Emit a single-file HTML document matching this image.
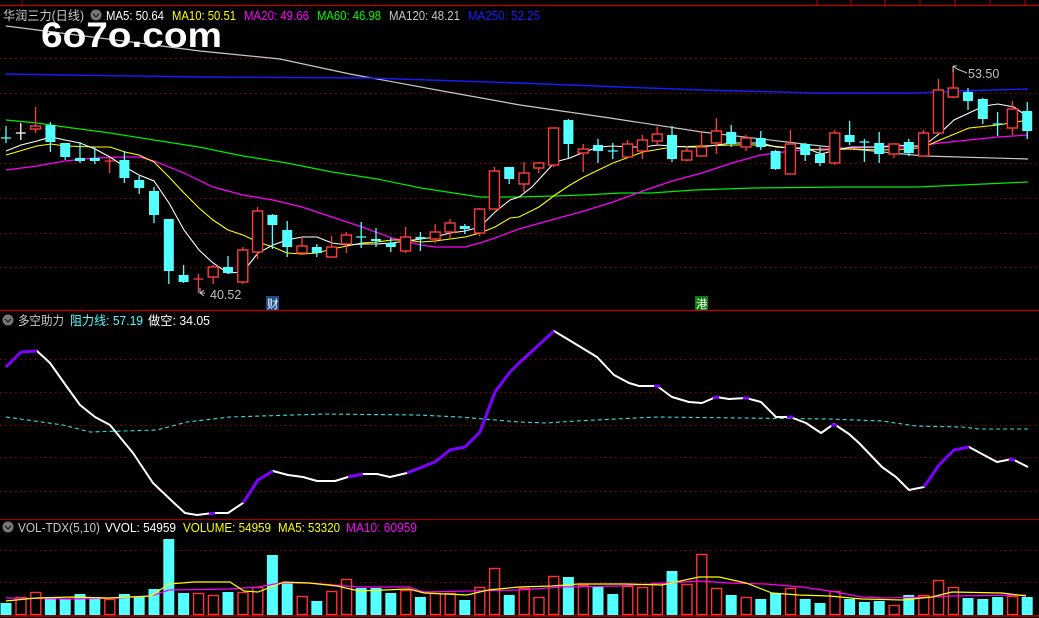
<!DOCTYPE html>
<html><head><meta charset="utf-8"><style>
html,body{margin:0;padding:0;background:#000;width:1039px;height:618px;overflow:hidden}
svg{display:block}
text{font-family:"Liberation Sans","Noto Sans CJK SC",sans-serif;font-size:12.5px}
.g{stroke:#9a0000;stroke-width:1;stroke-dasharray:1.5 3.5}
.rw{stroke:#ff3c3c;stroke-width:1.3;fill:none}
.cw{stroke:#54ffff;stroke-width:1.3;fill:none}
.rb rect{fill:#000;stroke:#ff3c3c;stroke-width:1.4}
.cb rect{fill:#54ffff}
.vr rect{fill:none;stroke:#ff3232;stroke-width:1.4}
.vc rect{fill:#54ffff}
</style></head><body>
<svg width="1039" height="618" viewBox="0 0 1039 618" xmlns="http://www.w3.org/2000/svg">
<rect width="1039" height="618" fill="#000"/>
<line x1="0" y1="5.5" x2="1039" y2="5.5" stroke="#c00000" stroke-width="1.2"/>
<path d="M22 0V5 M817 0V5 M851 0V5 M885 0V5 M920 0V5 M955 0V5 M990 0V5 M1025 0V5" stroke="#c00000"/>
<path class="g" d="M0 58.5H1039 M0 93.5H1039 M0 128.5H1039 M0 163.5H1039 M0 198.5H1039 M0 233.5H1039 M0 267.5H1039"/>
<path class="g" d="M0 359.5H1039 M0 392.5H1039 M0 425.5H1039 M0 457.5H1039 M0 491.5H1039"/>
<path class="g" d="M0 550.5H1039 M0 582.5H1039"/>
<line x1="0" y1="310.5" x2="1039" y2="310.5" stroke="#c00000" stroke-width="1.3"/>
<line x1="0" y1="519.5" x2="1039" y2="519.5" stroke="#a00000" stroke-width="1.3"/>
<line x1="0" y1="616" x2="1039" y2="616" stroke="#c00000" stroke-width="1.5"/>

<polyline fill="none" stroke="#c8c8c8" stroke-width="1.2" points="6,26 100,38 200,51 280,59 350,74 437,90 520,105 610,118 702,132 821,146 924,156 1028,159"/>
<polyline fill="none" stroke="#1a1aff" stroke-width="1.4" points="5,74 200,77 370,78 519,83 621,87 702,90 814,93 917,93 960,91 1028,89"/>
<polyline fill="none" stroke="#00ee00" stroke-width="1.2" points="6,120 37,123 65,127 110,133 154,140 199,147 243,156 287,163 332,172 377,179 421,188 480,197 519,197 555,196 584,195 621,193 651,193 695,190 754,188 843,187 917,187 962,185 1006,183 1028,182"/>
<polyline fill="none" stroke="#ff00ff" stroke-width="1.2" points="6,170 37,166 65,161 95,158 125,157 139,157 154,161 184,173 213,187 243,195 273,200 302,207 332,217 362,227 392,238 421,245 435,247 465,247 480,243 495,238 519,229 555,219 584,211 613,202 643,191 672,181 702,173 732,163 761,155 791,151 821,149 851,148 881,147 910,147 940,143 969,140 998,137 1028,135"/>
<polyline fill="none" stroke="#ffff00" stroke-width="1.1" points="6,155 37,146 51,144 65,146 95,147 110,147 125,152 139,155 154,162 169,177 184,193 199,208 213,220 228,230 243,235 258,242 273,247 287,253 302,254 317,253 332,249 347,246 362,243 377,242 392,240 406,240 421,242 435,241 450,239 465,237 480,233 495,227 510,218 519,217 539,207 555,195 570,185 584,177 613,163 643,152 672,147 702,146 732,145 761,145 791,148 821,150 851,149 881,150 910,149 924,147 940,140 969,128 998,125 1028,120"/>
<polyline fill="none" stroke="#ffffff" stroke-width="1.1" points="6,151 21,145 37,141 51,137 65,140 80,143 95,149 110,157 125,167 139,175 154,181 169,203 184,230 199,250 213,263 228,273 243,272 258,253 273,245 287,240 302,237 317,237 332,243 347,245 362,244 377,244 392,243 406,241 421,239 435,237 450,233 465,231 480,227 495,212 510,200 519,197 532,187 555,162 570,158 584,152 599,147 613,146 629,147 643,147 658,145 672,146 687,147 702,147 717,145 732,143 747,143 761,143 776,147 791,148 806,148 821,154 836,150 851,147 866,147 881,147 896,145 910,146 924,146 940,133 954,120 969,113 984,106 998,104 1014,107 1028,117"/>

<path class="rw" d="M35.6 107V133 M109.6 157V173 M198.4 274V293 M213.2 265V284 M242.8 247V284 M257.6 207V259 M302 237V255 M331.6 236V257 M346.4 232V253 M405.6 227V253 M435.2 224V243 M450 219V238 M479.6 208V236 M494.4 167V210 M524 162V192 M538.8 162V173 M553.6 128V167 M583.2 144V172 M627.6 140V157 M642.4 135V159 M657.2 127V145 M686.8 146V161 M701.6 132V156 M716.4 118V154 M746 135V151 M790.4 130V174 M834.8 130V165 M894 143V158 M923.6 130V156 M938.4 79V133 M953.2 66V98 M1012.4 101V135 M104.6 161H114.6 M193.4 279H203.4"/>
<path class="cw" d="M6 126V143 M50.4 122V152 M65.2 143V160 M80 142V163 M94.8 147V164 M124.4 151V183 M139.2 176V194 M154 187V223 M168.8 219V284 M183.6 265V283 M228 256V274 M272.4 214V249 M287.2 221V257 M316.8 244V257 M361.2 222V248 M376 228V247 M390.8 238V252 M420.4 232V251 M464.8 224V234 M509.2 167V184 M568.4 119V158 M598 139V163 M612.8 143V159 M672 126V162 M731.2 125V147 M760.8 131V150 M775.6 150V170 M805.2 143V161 M820 147V166 M849.6 121V145 M864.4 139V162 M879.2 132V163 M908.8 139V156 M968 88V110 M982.8 98V124 M997.6 112V136 M1027.2 102V139 M1 138H11 M356.2 237H366.2 M607.8 151H617.8 M859.4 142H869.4 M992.6 124H1002.6"/>
<path d="M20.8 123V140 M15.8 133H25.8" stroke="#fff" stroke-width="1.3"/>
<g class="rb">
<rect x="30.6" y="126" width="10" height="3"/><rect x="208.2" y="267" width="10" height="10"/><rect x="237.8" y="250" width="10" height="32"/><rect x="252.6" y="211" width="10" height="41"/><rect x="297" y="246" width="10" height="7"/><rect x="326.6" y="247" width="10" height="10"/><rect x="341.4" y="235" width="10" height="9"/><rect x="400.6" y="237" width="10" height="14"/><rect x="430.2" y="232" width="10" height="7"/><rect x="445" y="223" width="10" height="9"/><rect x="474.6" y="209" width="10" height="24"/><rect x="489.4" y="171" width="10" height="38"/>
<rect x="519" y="173" width="10" height="11"/><rect x="533.8" y="163" width="10" height="5"/><rect x="548.6" y="128" width="10" height="37"/><rect x="578.2" y="149" width="10" height="4"/><rect x="622.6" y="144" width="10" height="13"/><rect x="637.4" y="140" width="10" height="11"/><rect x="652.2" y="134" width="10" height="7"/><rect x="681.8" y="151" width="10" height="9"/><rect x="696.6" y="147" width="10" height="9"/><rect x="711.4" y="131" width="10" height="12"/><rect x="741" y="138" width="10" height="9"/><rect x="785.4" y="144" width="10" height="30"/><rect x="829.8" y="133" width="10" height="30"/><rect x="889" y="144" width="10" height="10"/><rect x="918.6" y="133" width="10" height="23"/><rect x="933.4" y="90" width="10" height="43"/><rect x="948.2" y="88" width="10" height="9"/><rect x="1007.4" y="109" width="10" height="19"/>
</g>
<g class="cb">
<rect x="45.4" y="125" width="10" height="17"/><rect x="60.2" y="143" width="10" height="14"/><rect x="75" y="158" width="10" height="3"/><rect x="89.8" y="158" width="10" height="3"/><rect x="119.4" y="160" width="10" height="18"/><rect x="134.2" y="180" width="10" height="8"/><rect x="149" y="191" width="10" height="24"/><rect x="163.8" y="219" width="10" height="52"/><rect x="178.6" y="275" width="10" height="7"/><rect x="223" y="267" width="10" height="6"/><rect x="267.4" y="215" width="10" height="10"/><rect x="282.2" y="230" width="10" height="17"/><rect x="311.8" y="247" width="10" height="6"/><rect x="371" y="239" width="10" height="2"/><rect x="385.8" y="243" width="10" height="4"/><rect x="415.4" y="237" width="10" height="2"/><rect x="459.8" y="226" width="10" height="3"/><rect x="504.2" y="167" width="10" height="12"/>
<rect x="563.4" y="120" width="10" height="24"/><rect x="593" y="145" width="10" height="6"/><rect x="667" y="135" width="10" height="24"/><rect x="726.2" y="132" width="10" height="12"/><rect x="755.8" y="138" width="10" height="9"/><rect x="770.6" y="151" width="10" height="18"/><rect x="800.2" y="144" width="10" height="11"/><rect x="815" y="154" width="10" height="9"/><rect x="844.6" y="135" width="10" height="7"/><rect x="874.2" y="143" width="10" height="11"/><rect x="903.8" y="142" width="10" height="11"/><rect x="963" y="92" width="10" height="9"/><rect x="977.8" y="99" width="10" height="20"/><rect x="1022.2" y="111" width="10" height="20"/>
</g>
<path d="M200 288V293H205 M200 293L204 290 M200 293L204 296" stroke="#c0c0c0" fill="none" stroke-width="1"/>
<text x="210" y="299" fill="#c0c0c0">40.52</text>
<path d="M953 66V72 M953 66L957 69 M953 66H957 M957 69L967 73" stroke="#c0c0c0" fill="none" stroke-width="1"/>
<text x="968" y="78" fill="#c0c0c0">53.50</text>
<rect x="266" y="296" width="13" height="14" fill="#1c4b8a"/>
<text x="267" y="308" fill="#fff" style="font-size:11.5px">财</text>
<rect x="695" y="296" width="13" height="14" fill="#0a7a0a"/>
<text x="696" y="308" fill="#fff" style="font-size:11.5px">港</text>

<text x="3" y="20" fill="#c8c8c8" textLength="81" lengthAdjust="spacingAndGlyphs">华润三力(日线)</text>
<circle cx="96" cy="15" r="5.5" fill="#777"/><path d="M93 14L96 17L99 14" stroke="#222" fill="none" stroke-width="1.3"/>
<text x="106" y="20" fill="#fff" textLength="58" lengthAdjust="spacingAndGlyphs">MA5: 50.64</text>
<text x="172" y="20" fill="#ffff00" textLength="64" lengthAdjust="spacingAndGlyphs">MA10: 50.51</text>
<text x="244" y="20" fill="#ff00ff" textLength="65" lengthAdjust="spacingAndGlyphs">MA20: 49.66</text>
<text x="317" y="20" fill="#00ff00" textLength="64" lengthAdjust="spacingAndGlyphs">MA60: 46.98</text>
<text x="389" y="20" fill="#c8c8c8" textLength="71" lengthAdjust="spacingAndGlyphs">MA120: 48.21</text>
<text x="468" y="20" fill="#1a1aff" textLength="72" lengthAdjust="spacingAndGlyphs">MA250: 52.25</text>
<text x="41" y="47" fill="#fff" style="font-size:35px;font-weight:bold" textLength="181" lengthAdjust="spacingAndGlyphs">6o7o.com</text>

<circle cx="8" cy="320" r="5.5" fill="#777"/><path d="M5 319L8 322L11 319" stroke="#222" fill="none" stroke-width="1.3"/>
<text x="18" y="325" fill="#c8c8c8" textLength="46" lengthAdjust="spacingAndGlyphs">多空助力</text>
<text x="70" y="325" fill="#54ffff" textLength="73" lengthAdjust="spacingAndGlyphs">阻力线: 57.19</text>
<text x="148" y="325" fill="#fff" textLength="62" lengthAdjust="spacingAndGlyphs">做空: 34.05</text>
<polyline fill="none" stroke="#33e0e0" stroke-width="1.1" stroke-dasharray="4 3" points="6,417 63,425 90,432 157,430 187,422 230,417 325,414 417,415 460,417 519,422 546,423 576,421 656,417 829,419 882,421 916,426 962,427 979,429 1028,429"/>
<polyline fill="none" stroke="#fff" stroke-width="2" stroke-linejoin="round" points="6,367 21,352 37,351 50,363 67,387 80,405 95,417 110,425 133,453 153,483 173,502 185,513 197,515 213,513 228,513 243,503 258,480 273,471 288,475 303,477 317,481 335,481 348,477 363,474 377,474 390,477 407,473 435,462 450,450 465,447 480,432 495,392 510,372 519,363 554,331 569,340 597,357 614,375 629,383 639,386 657,386 672,397 689,402 702,403 716,397 729,399 746,398 761,402 776,417 790,417 806,423 821,433 834,424 849,434 859,443 882,467 896,477 909,490 924,487 939,465 954,450 969,447 982,454 997,462 1012,459 1028,467"/>
<g fill="none" stroke="#8000ff" stroke-width="3" stroke-linejoin="round">
<polyline points="6,367 21,352 37,351"/>
<polyline points="209,514 215,513"/>
<polyline points="243,503 258,480 273,471"/>
<polyline points="348,477 363,474"/>
<polyline points="407,473 435,462 450,450 465,447 480,432 495,392 510,372 519,363 554,331"/>
<polyline points="654,386 660,386"/><polyline points="713,398 719,397"/><polyline points="743,398 749,398"/><polyline points="787,417 793,417"/><polyline points="831,425 837,425"/>
<polyline points="924,487 939,465 954,450 969,447"/>
<polyline points="1009,459 1015,460"/>
</g>

<circle cx="8" cy="527" r="5.5" fill="#777"/><path d="M5 526L8 529L11 526" stroke="#222" fill="none" stroke-width="1.3"/>
<text x="18" y="532" fill="#c8c8c8" textLength="82" lengthAdjust="spacingAndGlyphs">VOL-TDX(5,10)</text>
<text x="105" y="532" fill="#fff" textLength="71" lengthAdjust="spacingAndGlyphs">VVOL: 54959</text>
<text x="183" y="532" fill="#ffff00" textLength="88" lengthAdjust="spacingAndGlyphs">VOLUME: 54959</text>
<text x="278" y="532" fill="#ffff00" textLength="62" lengthAdjust="spacingAndGlyphs">MA5: 53320</text>
<text x="346" y="532" fill="#ff00ff" textLength="71" lengthAdjust="spacingAndGlyphs">MA10: 60959</text>
<g class="vc">
<rect x="0.5" y="603" width="11" height="12"/><rect x="44.9" y="597" width="11" height="18"/><rect x="59.7" y="599" width="11" height="16"/><rect x="74.5" y="594" width="11" height="21"/><rect x="89.3" y="597" width="11" height="18"/><rect x="118.9" y="594" width="11" height="21"/><rect x="133.7" y="597" width="11" height="18"/><rect x="148.5" y="589" width="11" height="26"/><rect x="163.3" y="539" width="11" height="76"/><rect x="178.1" y="593" width="11" height="22"/><rect x="222.5" y="592" width="11" height="23"/><rect x="266.9" y="555" width="11" height="60"/><rect x="281.7" y="582" width="11" height="33"/><rect x="311.3" y="601" width="11" height="14"/><rect x="355.7" y="588" width="11" height="27"/><rect x="370.5" y="588" width="11" height="27"/><rect x="385.3" y="593" width="11" height="22"/><rect x="414.9" y="597" width="11" height="18"/><rect x="459.3" y="600" width="11" height="15"/><rect x="503.7" y="595" width="11" height="20"/>
<rect x="562.9" y="577" width="11" height="38"/><rect x="592.5" y="586" width="11" height="29"/><rect x="607.3" y="594" width="11" height="21"/><rect x="666.5" y="571" width="11" height="44"/><rect x="725.7" y="595" width="11" height="20"/><rect x="755.3" y="599" width="11" height="16"/><rect x="770.1" y="593" width="11" height="22"/><rect x="799.7" y="599" width="11" height="16"/><rect x="814.5" y="603" width="11" height="12"/><rect x="844.1" y="599" width="11" height="16"/><rect x="858.9" y="602" width="11" height="13"/><rect x="873.7" y="601" width="11" height="14"/><rect x="903.3" y="595" width="11" height="20"/><rect x="962.5" y="598" width="11" height="17"/><rect x="977.3" y="599" width="11" height="16"/><rect x="992.1" y="597" width="11" height="18"/><rect x="1021.7" y="597" width="11" height="18"/>
</g>
<g class="vr">
<rect x="16" y="597.5" width="10" height="17"/><rect x="30.8" y="592.5" width="10" height="22"/><rect x="104.8" y="599.5" width="10" height="15"/><rect x="193.6" y="593.5" width="10" height="21"/><rect x="208.4" y="595.5" width="10" height="19"/><rect x="238" y="592.5" width="10" height="22"/><rect x="252.8" y="587.5" width="10" height="27"/><rect x="297.2" y="596.5" width="10" height="18"/><rect x="326.8" y="591.5" width="10" height="23"/><rect x="341.6" y="579.5" width="10" height="35"/><rect x="400.8" y="590.5" width="10" height="24"/><rect x="430.4" y="593.5" width="10" height="21"/><rect x="445.2" y="593.5" width="10" height="21"/><rect x="474.8" y="587.5" width="10" height="27"/><rect x="489.6" y="568.5" width="10" height="46"/>
<rect x="519.2" y="588.5" width="10" height="26"/><rect x="534" y="597.5" width="10" height="17"/><rect x="548.8" y="576.5" width="10" height="38"/><rect x="578.4" y="585.5" width="10" height="29"/><rect x="622.8" y="586.5" width="10" height="28"/><rect x="637.6" y="587.5" width="10" height="27"/><rect x="652.4" y="583.5" width="10" height="31"/><rect x="682" y="584.5" width="10" height="30"/><rect x="696.8" y="554.5" width="10" height="60"/><rect x="711.6" y="588.5" width="10" height="26"/><rect x="741.2" y="597.5" width="10" height="17"/><rect x="785.6" y="588.5" width="10" height="26"/><rect x="830" y="591.5" width="10" height="23"/><rect x="889.2" y="605.5" width="10" height="9"/><rect x="918.8" y="595.5" width="10" height="19"/><rect x="933.6" y="580.5" width="10" height="34"/><rect x="948.4" y="587.5" width="10" height="27"/><rect x="1007.6" y="596.5" width="10" height="18"/>
</g>
<polyline fill="none" stroke="#ff00ff" stroke-width="1.2" points="6,598 72,599 118,598 151,596 169,590 230,589 258,587 280,583 309,583 359,587 409,587 424,592 519,590 562,587 619,586 699,581 729,583 766,584 802,587 836,592 862,597 886,598 932,597 952,596 1026,595"/>
<polyline fill="none" stroke="#ffff00" stroke-width="1.2" points="6,601 36,598 72,597 108,598 151,596 169,584 194,582 230,582 244,591 258,592 284,582 309,583 337,586 359,591 409,589 424,593 467,595 488,590 519,587 552,586 579,584 626,584 662,585 699,577 719,577 746,583 772,593 799,595 829,596 862,599 902,600 932,597 952,592 1002,593 1026,596"/>
</svg>
</body></html>
